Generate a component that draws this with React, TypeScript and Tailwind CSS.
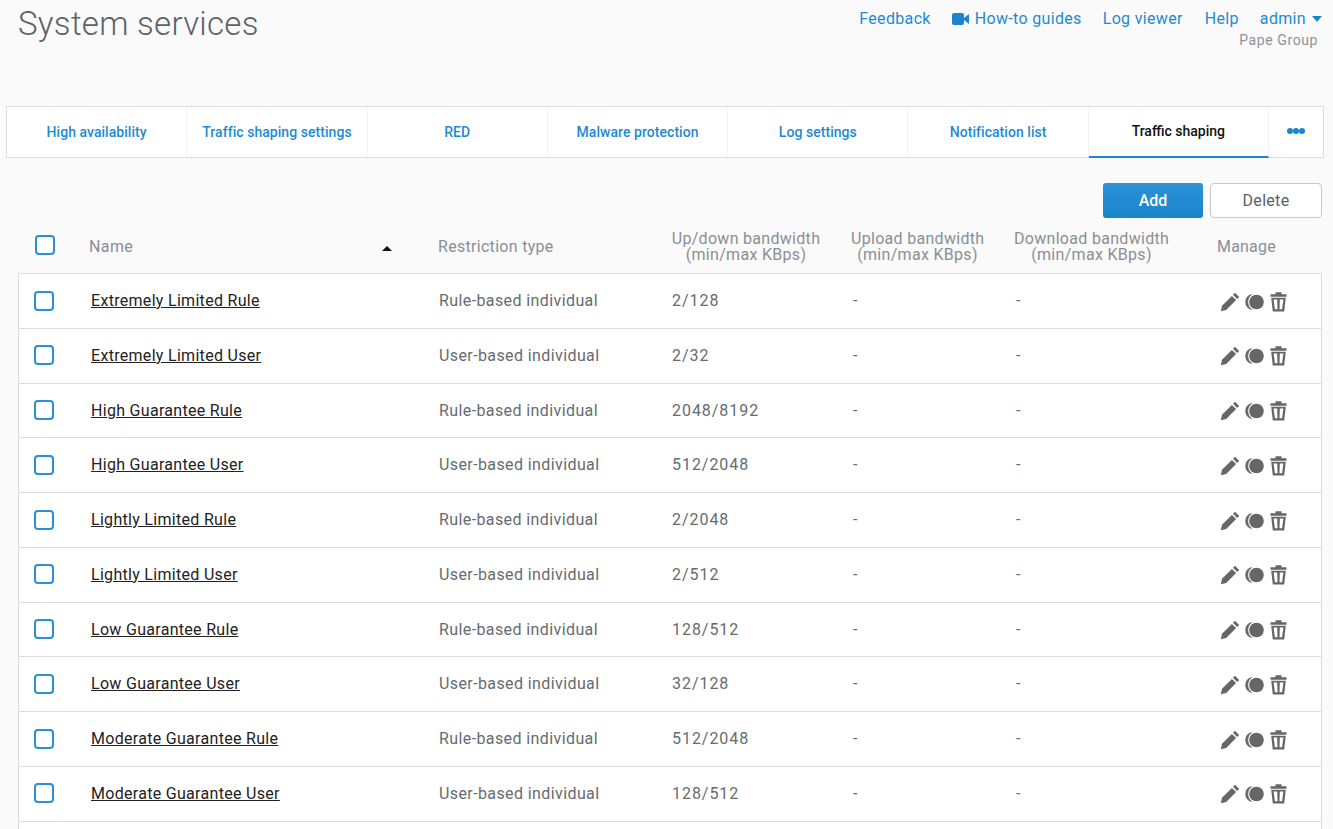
const font = { fontFamily: "Roboto, sans-serif" };

const tabs = ["High availability", "Traffic shaping settings", "RED", "Malware protection", "Log settings", "Notification list"];

const rows = [
  ["Extremely Limited Rule", "Rule-based individual", "2/128"],
  ["Extremely Limited User", "User-based individual", "2/32"],
  ["High Guarantee Rule", "Rule-based individual", "2048/8192"],
  ["High Guarantee User", "User-based individual", "512/2048"],
  ["Lightly Limited Rule", "Rule-based individual", "2/2048"],
  ["Lightly Limited User", "User-based individual", "2/512"],
  ["Low Guarantee Rule", "Rule-based individual", "128/512"],
  ["Low Guarantee User", "User-based individual", "32/128"],
  ["Moderate Guarantee Rule", "Rule-based individual", "512/2048"],
  ["Moderate Guarantee User", "User-based individual", "128/512"],
];

function Pencil() {
  return (
    <svg width="20" height="20" viewBox="0 0 20 20" fill="#666">
      <path d="M15 0.8 L19.2 5 L17.2 7 L13 2.8 Z" />
      <path d="M11.9 3.9 L16.1 8.1 L6.2 18 L0.8 19.2 L2 13.8 Z" />
    </svg>
  );
}
function Toggle() {
  return (
    <svg width="20" height="18" viewBox="0 0 20 18" fill="#666">
      <path d="M6.6 1.6 A7.6 7.6 0 0 0 6.6 16.4 A9 9 0 0 1 6.6 1.6 Z" stroke="#666" strokeWidth="0.8" />
      <circle cx="11.5" cy="9" r="7.3" />
    </svg>
  );
}
function Trash() {
  return (
    <svg width="17" height="20" viewBox="0 0 17 20" fill="#666">
      <path d="M5.5 0.3 H11.5 V2.3 H16.5 V4.8 H0.5 V2.3 H5.5 Z" />
      <path fillRule="evenodd" d="M1.2 5.8 H15.8 L14.2 19.6 H2.8 Z M3.6 7.4 L4.9 17.3 H7.5 L7.2 7.4 Z M9.8 7.4 L9.5 17.3 H12.1 L13.4 7.4 Z" />
    </svg>
  );
}
function Box({ className }: { className: string }) {
  return <div className={`w-[20px] h-[20px] rounded-[4px] border-2 border-[#2a8fd4] bg-white ${className}`} />;
}

export default function App() {
  return (
    <div className="relative w-[1333px] h-[829px] overflow-hidden bg-[#fafafa]" style={font}>
      <h1 className="absolute left-[18px] top-[3px] text-[33px] leading-[42px] text-[#5c6268] font-light tracking-[0.3px]">System services</h1>

      <div className="absolute right-[11px] top-[9px] flex items-center text-[16px] leading-[20px] text-[#1f8ad2] tracking-[0.33px]">
        <span>Feedback</span>
        <svg className="ml-[21px] mr-[6px]" width="17" height="12" viewBox="0 0 17 12" fill="#1a85cd">
          <rect x="0" y="0" width="12" height="12" rx="2" />
          <path d="M12 5 L17 1 V11 L12 7 Z" />
        </svg>
        <span>How-to guides</span>
        <span className="ml-[21px]">Log viewer</span>
        <span className="ml-[22px]">Help</span>
        <span className="ml-[21px]">admin</span>
        <svg className="ml-[6px]" width="10" height="6" viewBox="0 0 10 6" fill="#1a85cd"><path d="M0 0 H10 L5 6 Z" /></svg>
      </div>
      <div className="absolute right-[15px] top-[31px] text-[14px] leading-[18px] text-[#8d9298] tracking-[0.6px]">Pape Group</div>

      <div className="absolute left-[6px] top-[106px] w-[1318px] h-[52px] flex bg-white border border-[#dcdcdc]">
        {tabs.map((t) => (
          <div key={t} className="w-[180.3px] h-full flex items-center justify-center border-r border-[#f3f3f3] text-[14px] font-medium text-[#1f8ad2] tracking-[0.05px]">
            {t}
          </div>
        ))}
        <div className="w-[180px] h-[51px] flex items-center justify-center border-b-2 border-[#1a85cd] border-r border-r-[#f3f3f3] text-[14px] font-medium text-[#111]">
          Traffic shaping
        </div>
        <div className="flex-1 flex items-center justify-center pb-[3px]">
          <span className="w-[6px] h-[6px] rounded-full bg-[#1a85cd]" />
          <span className="w-[6px] h-[6px] rounded-full bg-[#1a85cd]" />
          <span className="w-[6px] h-[6px] rounded-full bg-[#1a85cd]" />
        </div>
      </div>

      <div className="absolute left-[1103px] top-[183px] w-[100px] h-[35px] rounded-[3px] bg-gradient-to-b from-[#2b93d6] to-[#1983cb] flex items-center justify-center text-white text-[16px] font-medium">Add</div>
      <div className="absolute left-[1210px] top-[183px] w-[112px] h-[35px] rounded-[4px] border border-[#c8c8c8] bg-white flex items-center justify-center text-[#5a5f65] text-[16px] tracking-[0.3px]">Delete</div>

      <Box className="absolute left-[35px] top-[235px]" />
      <div className="absolute left-[89px] top-[237px] text-[16px] leading-[20px] text-[#8a8f94] tracking-[0.4px]">Name</div>
      <svg className="absolute left-[382px] top-[246px]" width="10" height="5" viewBox="0 0 10 5" fill="#111"><path d="M5 0 L10 5 H0 Z" /></svg>
      <div className="absolute left-[438px] top-[237px] text-[16px] leading-[20px] text-[#8a8f94] tracking-[0.3px]">Restriction type</div>
      {[
        [671, 150, "Up/down bandwidth"],
        [851, 133, "Upload bandwidth"],
        [1014, 155, "Download bandwidth"],
      ].map(([x, w, t]) => (
        <div key={t as string} className="absolute top-[231px] text-center text-[16px] leading-[16px] text-[#8a8f94] tracking-[0.3px] whitespace-nowrap" style={{ left: x as number, width: w as number }}>
          {t}
          <br />
          (min/max KBps)
        </div>
      ))}
      <div className="absolute left-[1217px] top-[237px] text-[16px] leading-[20px] text-[#8a8f94] tracking-[0.2px]">Manage</div>

      <div className="absolute left-[18px] top-[273px] w-[1304px] bg-white border-l border-r border-t border-[#dcdcdc]">
        {rows.map(([name, type, bw]) => (
          <div key={name} className="relative h-[54.75px] border-b border-[#dcdcdc] text-[16px]">
            <Box className="absolute left-[15px] top-[16.5px]" />
            <span className="absolute left-[72px] top-[17px] leading-[20px] text-[#222] underline underline-offset-[1px] tracking-[0.3px]">{name}</span>
            <span className="absolute left-[420px] top-[17px] leading-[20px] text-[#666b70] tracking-[0.4px]">{type}</span>
            <span className="absolute left-[653px] top-[17px] leading-[20px] text-[#666b70] tracking-[0.95px]">{bw}</span>
            <span className="absolute left-[834px] top-[17px] leading-[20px] text-[#666b70]">-</span>
            <span className="absolute left-[997px] top-[17px] leading-[20px] text-[#666b70]">-</span>
            <div className="absolute left-[1201px] top-[17.5px] flex items-center gap-[5px]">
              <Pencil />
              <Toggle />
              <Trash />
            </div>
          </div>
        ))}
        <div className="h-[20px]" />
      </div>
    </div>
  );
}
